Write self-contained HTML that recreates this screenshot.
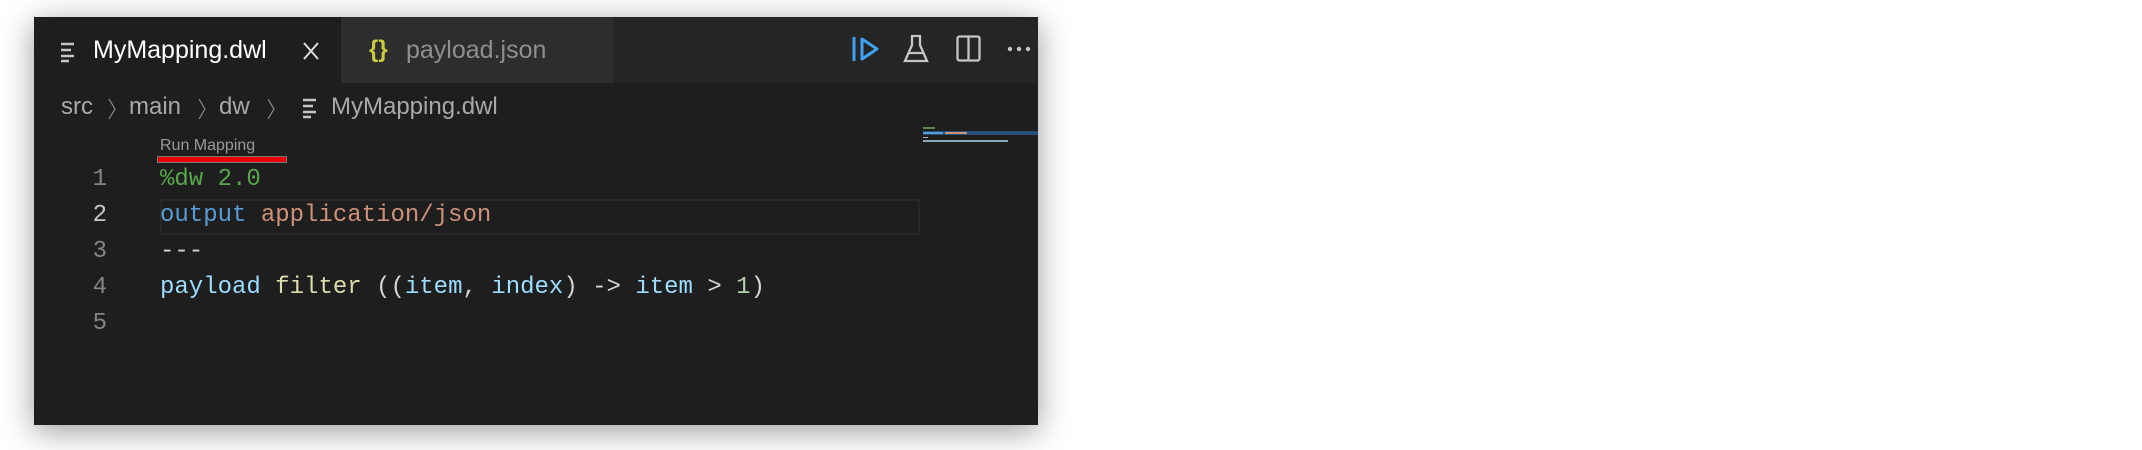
<!DOCTYPE html>
<html><head><meta charset="utf-8"><style>
body{margin:0;width:2142px;height:450px;background:#fff;position:relative;overflow:hidden;font-family:"Liberation Sans",sans-serif}
.win{position:absolute;left:34px;top:17px;width:1004px;height:408px;background:#1e1e1e;box-shadow:0 6px 30px rgba(0,0,0,.4)}
.tabs{position:absolute;left:0;top:0;width:1004px;height:66px;background:#252526}
.t1{position:absolute;left:0;top:0;width:307px;height:66px;background:#1e1e1e}
.t2{position:absolute;left:307px;top:0;width:273px;height:66px;background:#2d2d2d}
.txt{position:absolute;white-space:nowrap}
.mono{font-family:"Liberation Mono",monospace;font-size:24px;position:absolute;white-space:pre;line-height:36px}
.ln{color:#858585;width:40px;text-align:right;left:33px}
</style></head><body>
<div class="win">
<div class="tabs">
 <div class="t1"></div><div class="t2"></div>
 <svg style="position:absolute;left:26px;top:24px" width="16" height="22"><g stroke="#c5c5c5" stroke-width="2.5"><line x1="1" y1="3" x2="14" y2="3"/><line x1="1" y1="9" x2="11" y2="9"/><line x1="1" y1="15" x2="14" y2="15"/><line x1="1" y1="20" x2="9" y2="20"/></g></svg>
 <div class="txt" style="left:59px;top:19px;font-size:25px;color:#fff">MyMapping.dwl</div>
 <svg style="position:absolute;left:268px;top:24px" width="18" height="20"><path d="M2 2L16 18M16 2L2 18" stroke="#ddd" stroke-width="2"/></svg>
 <div class="txt" style="left:335px;top:19px;font-size:24px;color:#cbcb41;font-weight:bold">{}</div>
 <div class="txt" style="left:372px;top:19px;font-size:25px;color:#8f8f8f">payload.json</div>
 <svg style="position:absolute;left:818px;top:19px" width="28" height="26"><line x1="2" y1="1" x2="2" y2="25" stroke="#3fa3f5" stroke-width="3"/><path d="M10 3L25 13L10 23Z" fill="none" stroke="#3fa3f5" stroke-width="3" stroke-linejoin="round"/></svg>
 <svg style="position:absolute;left:869px;top:17px" width="26" height="30"><path d="M8 2H18M9 2V11L2 27H24L17 11V2M5 19H21" fill="none" stroke="#c5c5c5" stroke-width="2.3"/></svg>
 <svg style="position:absolute;left:922px;top:18px" width="26" height="28"><rect x="1.5" y="1.5" width="22" height="24" rx="2" fill="none" stroke="#c5c5c5" stroke-width="2.3"/><line x1="12.5" y1="2" x2="12.5" y2="26" stroke="#c5c5c5" stroke-width="2.3"/></svg>
 <svg style="position:absolute;left:972px;top:28px" width="28" height="8"><g fill="#c5c5c5"><circle cx="4" cy="4" r="2.2"/><circle cx="13" cy="4" r="2.2"/><circle cx="22" cy="4" r="2.2"/></g></svg>
</div>
<div class="txt" style="left:27px;top:76px;font-size:24px;color:#a9a9a9">src</div>
<svg style="position:absolute;left:73px;top:80px" width="10" height="24"><path d="M2 2L8 12L2 22" fill="none" stroke="#8a8a8a" stroke-width="1.2"/></svg>
<div class="txt" style="left:95px;top:76px;font-size:24px;color:#a9a9a9">main</div>
<svg style="position:absolute;left:163px;top:80px" width="10" height="24"><path d="M2 2L8 12L2 22" fill="none" stroke="#8a8a8a" stroke-width="1.2"/></svg>
<div class="txt" style="left:185px;top:76px;font-size:24px;color:#a9a9a9">dw</div>
<svg style="position:absolute;left:232px;top:80px" width="10" height="24"><path d="M2 2L8 12L2 22" fill="none" stroke="#8a8a8a" stroke-width="1.2"/></svg>
<svg style="position:absolute;left:268px;top:80px" width="16" height="22"><g stroke="#c5c5c5" stroke-width="2.5"><line x1="1" y1="3" x2="14" y2="3"/><line x1="1" y1="9" x2="11" y2="9"/><line x1="1" y1="15" x2="14" y2="15"/><line x1="1" y1="20" x2="9" y2="20"/></g></svg>
<div class="txt" style="left:297px;top:76px;font-size:24px;color:#a9a9a9">MyMapping.dwl</div>
<div class="txt" style="left:126px;top:120px;font-size:16px;color:#999">Run Mapping</div>
<div style="position:absolute;left:123px;top:139px;width:128px;height:5px;background:#e00;border:1px solid #777"></div>
<div style="position:absolute;left:126px;top:182px;width:756px;height:32px;border:2px solid #282828"></div>
<div class="mono ln" style="top:145px">1</div>
<div class="mono ln" style="top:181px;color:#c6c6c6">2</div>
<div class="mono ln" style="top:217px">3</div>
<div class="mono ln" style="top:253px">4</div>
<div class="mono ln" style="top:289px">5</div>
<div class="mono" style="left:126px;top:145px;color:#56a64a">%dw 2.0</div>
<div class="mono" style="left:126px;top:181px"><span style="color:#569cd6">output</span> <span style="color:#ce9178">application/json</span></div>
<div class="mono" style="left:126px;top:217px;color:#d4d4d4">---</div>
<div class="mono" style="left:126px;top:253px;color:#d4d4d4"><span style="color:#9cdcfe">payload</span> <span style="color:#dcdcaa">filter</span> ((<span style="color:#9cdcfe">item</span>, <span style="color:#9cdcfe">index</span>) -&gt; <span style="color:#9cdcfe">item</span> &gt; <span style="color:#b5cea8">1</span>)</div>
<div style="position:absolute;left:889px;top:110px;width:12px;height:2px;background:#5a8a4a"></div>
<div style="position:absolute;left:889px;top:114px;width:115px;height:4px;background:#264f78"></div>
<div style="position:absolute;left:889px;top:115px;width:20px;height:2px;background:#569cd6"></div>
<div style="position:absolute;left:911px;top:115px;width:22px;height:2px;background:#ce9178"></div>
<div style="position:absolute;left:889px;top:120px;width:5px;height:1px;background:#aaa"></div>
<div style="position:absolute;left:889px;top:123px;width:85px;height:2px;background:#8aa8b8"></div>
</div>
</body></html>
